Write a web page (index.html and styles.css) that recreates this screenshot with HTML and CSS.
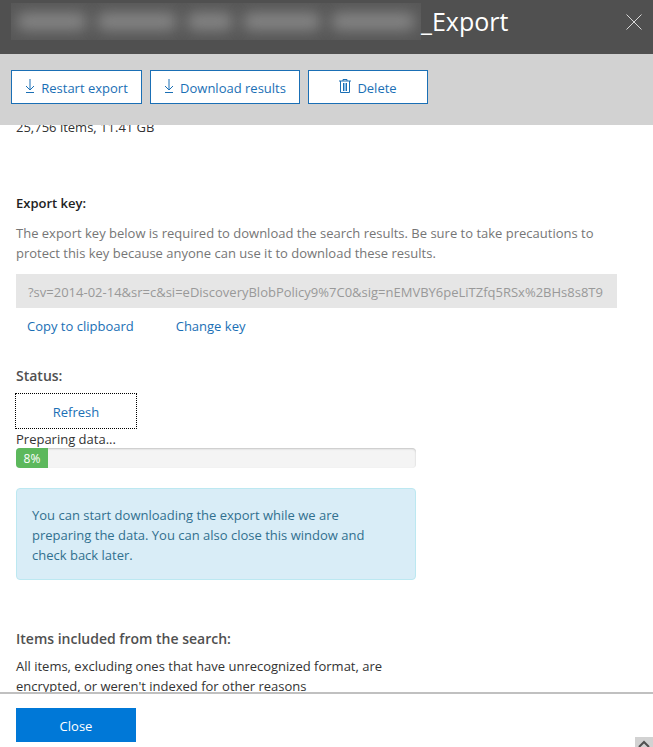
FILE: index.html
```html
<!DOCTYPE html>
<html lang="en">
<head>
  <meta charset="UTF-8">
  <meta name="viewport" content="width=device-width, initial-scale=1">
  <title>Export</title>
  <link rel="stylesheet" href="styles.css">
</head>
<body>
  <div class="panel">
    <header class="panel-header">
      <div class="redacted" aria-hidden="true">
        <span class="word w1"></span>
        <span class="word w2"></span>
        <span class="word w3"></span>
        <span class="word w4"></span>
        <span class="word w5"></span>
      </div>
      <h1>_Export</h1>
      <button type="button" class="dismiss" aria-label="Close panel">
        <svg width="18" height="18" viewBox="0 0 18 18"><path d="M1.5 1.5l15 15M16.5 1.5l-15 15"/></svg>
      </button>
    </header>

    <div class="toolbar">
      <button type="button" class="tool restart">
        <svg width="10" height="16" viewBox="0 0 10 16"><path d="M5 1v11M1 8l4 4 4-4M1 14.5h8"/></svg>
        Restart export
      </button>
      <button type="button" class="tool download">
        <svg width="10" height="16" viewBox="0 0 10 16"><path d="M5 1v11M1 8l4 4 4-4M1 14.5h8"/></svg>
        Download results
      </button>
      <button type="button" class="tool delete">
        <svg width="12" height="16" viewBox="0 0 12 16"><path class="fill" d="M4 5h4v8H4z"/><path d="M0 3h12M4 3V1.5h4V3M1.5 3v11.500h9V3M4.500 5v8M7.500 5v8"/></svg>
        Delete
      </button>
    </div>

    <main class="panel-body">
      <div class="content">
        <p class="size">25,756 items, 11.41 GB</p>

        <section class="key">
          <h2 class="dark"><label for="exportKey">Export key:</label></h2>
          <p class="hint">The export key below is required to download the search results. Be sure to take precautions to protect this key because anyone can use it to download these results.</p>
          <input type="text" id="exportKey" disabled value="?sv=2014-02-14&amp;sr=c&amp;si=eDiscoveryBlobPolicy9%7C0&amp;sig=nEMVBY6peLiTZfq5RSx%2BHs8s8T9">
          <div class="links">
            <a href="#">Copy to clipboard</a>
            <a href="#">Change key</a>
          </div>
        </section>

        <section class="status">
          <h2>Status:</h2>
          <button type="button" class="refresh">Refresh</button>
          <p>Preparing data...</p>
          <div class="progress">
            <div class="progress-bar" style="width: 8%">8%</div>
          </div>
          <div class="alert">You can start downloading the export while we are preparing the data. You can also close this window and check back later.</div>
        </section>

        <section class="included">
          <h2>Items included from the search:</h2>
          <p>All items, excluding ones that have unrecognized format, are encrypted, or weren't indexed for other reasons</p>
        </section>
      </div>
    </main>

    <footer class="panel-footer">
      <button type="button" class="close">Close</button>
      <div class="scroll-up">
        <svg width="12" height="8" viewBox="0 0 12 8"><path d="M1 7l5-5 5 5"/></svg>
      </div>
    </footer>
  </div>
</body>
</html>
```
FILE: styles.css
```css
* {
  box-sizing: border-box;
}
body {
  margin: 0;
  font-family: "Segoe UI", "Open Sans", sans-serif;
  font-size: 13px;
  line-height: 20px;
  color: #333;
  background-color: #fff;
}
h1, h2, p {
  margin: 0;
}
button, input {
  font: inherit;
}
svg {
  fill: none;
  stroke: currentColor;
}
.panel {
  display: flex;
  flex-direction: column;
  height: 100vh;
  overflow: hidden;
}

/* header */
.panel-header {
  display: flex;
  flex: none;
  height: 54px;
  padding: 3px 10px 14px 11px;
  background-color: #505050;
  color: #fff;
}
.panel-header h1 {
  font-size: 25px;
  font-weight: 400;
  line-height: 36px;
}
.redacted {
  display: flex;
  align-items: center;
  gap: 10px;
  width: 410px;
  padding: 0 6px;
  overflow: hidden;
  background-color: #585858;
}
.word {
  height: 17px;
  border-radius: 8px;
  background-color: #868686;
  filter: blur(7px);
}
.w1 { flex: 70; }
.w2 { flex: 80; }
.w3 { flex: 45; }
.w4 { flex: 78; }
.w5 { flex: 84; }
.dismiss {
  display: flex;
  align-items: center;
  margin-left: auto;
  padding: 0;
  border: 0;
  background: none;
  color: #d8d8d8;
}

/* toolbar */
.toolbar {
  display: flex;
  flex: none;
  gap: 8px;
  height: 71px;
  padding: 16px 11px;
  background-color: #d2d2d2;
}
.tool {
  display: flex;
  align-items: center;
  justify-content: center;
  gap: 6px;
  height: 34px;
  padding: 2px 0 0;
  border: 1px solid #1a6fb5;
  background-color: #fff;
  color: #1a6fb5;
  white-space: nowrap;
}
.tool svg {
  margin-bottom: 4px;
}
.fill {
  fill: #8fc0ea;
  stroke: none;
}
.restart { width: 131px; }
.download { width: 150px; }
.delete { width: 120px; }

/* body, scrolled down past the top of the first line */
.panel-body {
  flex: 1;
  min-height: 0;
  overflow: hidden;
}
.content {
  margin-top: -8px;
  padding: 0 36px 0 16px;
}
h2 {
  font-size: 14px;
  font-weight: 600;
  line-height: 20px;
  color: #505050;
}
h2.dark {
  font-size: 13px;
  color: #222;
}
.key {
  margin-top: 56px;
}
.hint {
  margin: 10px 0 11px;
  color: #767676;
}
.key input {
  display: block;
  width: 100%;
  height: 34px;
  padding: 6px 12px 4px;
  border: 0;
  background-color: #e6e6e6;
  color: #999;
}
.links {
  display: flex;
  gap: 42px;
  margin-top: 8px;
  padding-left: 11px;
}
a {
  color: #1a6fb5;
  text-decoration: none;
}
.status {
  max-width: 400px;
  margin-top: 30px;
}
.refresh {
  display: block;
  width: 120px;
  height: 34px;
  margin: 8px 0 1px;
  padding: 2px 0 0;
  border: 0;
  outline: 1px dotted #000;
  background-color: #fff;
  color: #1a6fb5;
}
.progress {
  height: 20px;
  margin-top: -1px;
  overflow: hidden;
  border-radius: 4px;
  background-color: #f4f4f4;
  box-shadow: inset 0 1px 2px rgba(0,0,0,0.2);
}
.progress-bar {
  height: 20px;
  background-color: #5cb85c;
  color: #fff;
  font-size: 12px;
  line-height: 21px;
  text-align: center;
}
.alert {
  margin-top: 20px;
  padding: 16px 15px 14px;
  border: 1px solid #bce8f1;
  border-radius: 4px;
  background-color: #d9edf7;
  color: #31708f;
}
.included {
  max-width: 400px;
  margin-top: 49px;
}
.included p {
  margin-top: 7px;
}

/* footer */
.panel-footer {
  display: flex;
  flex: none;
  justify-content: space-between;
  height: 55px;
  padding: 14px 0 0 16px;
  border-top: 2px solid #c0c0c0;
}
.close {
  width: 120px;
  height: 34px;
  padding: 2px 0 0;
  border: 0;
  background-color: #0078d7;
  color: #fff;
}
.scroll-up {
  align-self: flex-end;
  width: 18px;
  height: 10px;
  padding: 3px;
  overflow: hidden;
  background-color: #d2d2d2;
  line-height: 0;
}
.scroll-up svg {
  stroke-width: 2;
  color: #505050;
}
```
